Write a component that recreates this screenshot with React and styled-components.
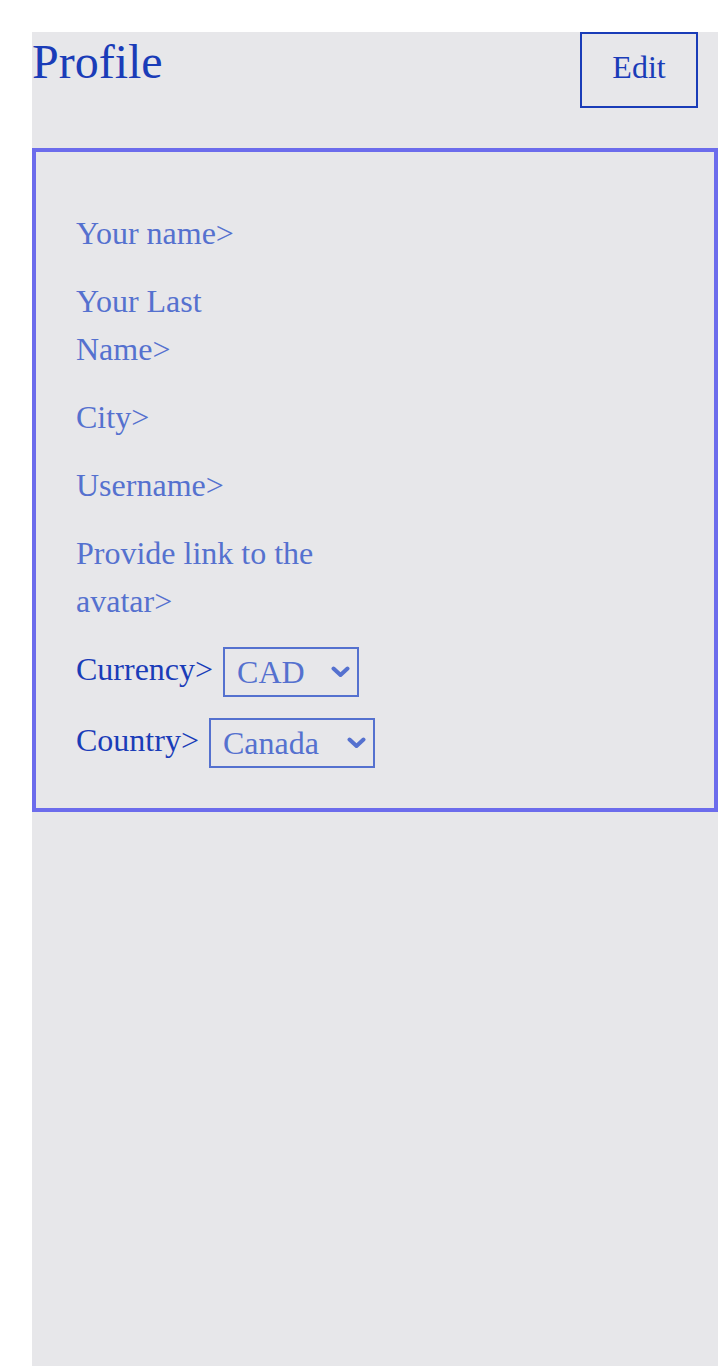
import styled, { createGlobalStyle } from 'styled-components';

const GlobalStyle = createGlobalStyle`
	body {
		margin: 0;
		background: #ffffff;
		font-family: 'Liberation Serif', 'Times New Roman', serif;
	}
`;

const Page = styled.div`
	margin: 32px 0 0 32px;
	min-height: calc(100vh - 32px);
	background: #e7e7ea;
	display: flex;
	flex-direction: column;
	gap: 40px;
`;

const Header = styled.header`
	display: flex;
	justify-content: space-between;
	align-items: flex-start;
	padding-right: 20px;
`;

const Title = styled.h1`
	margin: 0;
	font-size: 48px;
	line-height: 60px;
	font-weight: normal;
	color: #1a3cb8;
`;

const EditButton = styled.button`
	width: 118px;
	height: 76px;
	padding: 0 0 6px;
	display: flex;
	align-items: center;
	justify-content: center;
	background: transparent;
	border: 2px solid #1a3cb8;
	color: #1a3cb8;
	font-family: inherit;
	font-size: 32px;
	cursor: pointer;
`;

const Card = styled.section`
	border: 4px solid #6c6cec;
	padding: 57px 40px 40px;
	display: flex;
	flex-direction: column;
	gap: 20px;
`;

const Label = styled.span`
	display: block;
	max-width: ${(p) => p.$maxWidth || 'none'};
	font-size: 32px;
	line-height: 48px;
	color: ${(p) => (p.$strong ? '#1a3cb8' : '#5571cf')};
`;

const SelectRow = styled.div`
	display: flex;
	align-items: flex-start;
	gap: 10px;
	height: ${(p) => p.$height || 'auto'};
`;

const SelectWrap = styled.div`
	position: relative;
	width: ${(p) => p.$width};
	height: 50px;
	margin-top: 2px;
`;

const Select = styled.select`
	appearance: none;
	width: 100%;
	height: 100%;
	box-sizing: border-box;
	padding: 0 40px 0 12px;
	background: transparent;
	border: 2px solid #5571cf;
	border-radius: 0;
	color: #5571cf;
	font-family: inherit;
	font-size: 32px;
	outline: none;
`;

const Chevron = styled.svg`
	position: absolute;
	right: 9px;
	top: 50%;
	transform: translateY(-50%);
	pointer-events: none;
`;

const ChevronIcon = () => (
	<Chevron width="19" height="12" viewBox="0 0 19 12">
		<path d="M2.5 2.5 L9.5 9 L16.5 2.5" fill="none" stroke="#5571cf" strokeWidth="4" strokeLinecap="round" strokeLinejoin="round" />
	</Chevron>
);

const Dropdown = ({ width, value, options }) => (
	<SelectWrap $width={width}>
		<Select defaultValue={value}>
			{options.map((o) => (
				<option key={o}>{o}</option>
			))}
		</Select>
		<ChevronIcon />
	</SelectWrap>
);

export default function App() {
	return (
		<>
			<GlobalStyle />
			<Page>
				<Header>
					<Title>Profile</Title>
					<EditButton>Edit</EditButton>
				</Header>
				<Card>
					<Label>Your name&gt;</Label>
					<Label $maxWidth="200px">Your Last Name&gt;</Label>
					<Label>City&gt;</Label>
					<Label>Username&gt;</Label>
					<Label $maxWidth="260px">Provide link to the avatar&gt;</Label>
					<SelectRow $height="51px">
						<Label $strong>Currency&gt;</Label>
						<Dropdown width="136px" value="CAD" options={['CAD', 'USD', 'EUR']} />
					</SelectRow>
					<SelectRow $height="52px">
						<Label $strong>Country&gt;</Label>
						<Dropdown width="166px" value="Canada" options={['Canada', 'USA']} />
					</SelectRow>
				</Card>
			</Page>
		</>
	);
}
